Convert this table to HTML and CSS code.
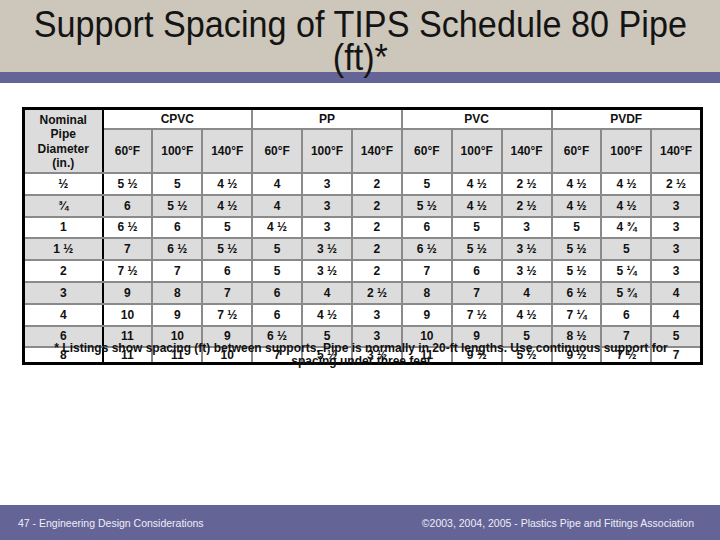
FILE: index.html
```html
<!DOCTYPE html>
<html>
<head>
<meta charset="utf-8">
<link rel="stylesheet" href="styles.css">
</head>
<body>
<div class="slide">
  <header class="title-band">
    <h1 class="title">Support Spacing of TIPS Schedule 80 Pipe<br>(ft)*</h1>
  </header>
  <div class="rule"></div>
  <main class="content">
    <div class="table-wrap">
      <table class="grid">
        <colgroup>
          <col class="c-first">
          <col span="12" class="c-val">
        </colgroup>
        <thead>
          <tr class="h1">
            <th rowspan="2" class="first shade">Nominal<br>Pipe<br>Diameter<br>(in.)</th>
            <th colspan="3" class="grp">CPVC</th>
            <th colspan="3" class="grp">PP</th>
            <th colspan="3" class="grp">PVC</th>
            <th colspan="3" class="grp">PVDF</th>
          </tr>
          <tr class="h2 shade">
            <th class="gs">60°F</th><th>100°F</th><th>140°F</th>
            <th class="gs">60°F</th><th>100°F</th><th>140°F</th>
            <th class="gs">60°F</th><th>100°F</th><th>140°F</th>
            <th class="gs">60°F</th><th>100°F</th><th>140°F</th>
          </tr>
        </thead>
        <tbody>
          <tr><td class="first">½</td><td class="gs">5 ½</td><td>5</td><td>4 ½</td><td class="gs">4</td><td>3</td><td>2</td><td class="gs">5</td><td>4 ½</td><td>2 ½</td><td class="gs">4 ½</td><td>4 ½</td><td>2 ½</td></tr>
          <tr class="shade"><td class="first">¾</td><td class="gs">6</td><td>5 ½</td><td>4 ½</td><td class="gs">4</td><td>3</td><td>2</td><td class="gs">5 ½</td><td>4 ½</td><td>2 ½</td><td class="gs">4 ½</td><td>4 ½</td><td>3</td></tr>
          <tr><td class="first">1</td><td class="gs">6 ½</td><td>6</td><td>5</td><td class="gs">4 ½</td><td>3</td><td>2</td><td class="gs">6</td><td>5</td><td>3</td><td class="gs">5</td><td>4 ¾</td><td>3</td></tr>
          <tr class="shade"><td class="first">1 ½</td><td class="gs">7</td><td>6 ½</td><td>5 ½</td><td class="gs">5</td><td>3 ½</td><td>2</td><td class="gs">6 ½</td><td>5 ½</td><td>3 ½</td><td class="gs">5 ½</td><td>5</td><td>3</td></tr>
          <tr><td class="first">2</td><td class="gs">7 ½</td><td>7</td><td>6</td><td class="gs">5</td><td>3 ½</td><td>2</td><td class="gs">7</td><td>6</td><td>3 ½</td><td class="gs">5 ½</td><td>5 ¼</td><td>3</td></tr>
          <tr class="shade"><td class="first">3</td><td class="gs">9</td><td>8</td><td>7</td><td class="gs">6</td><td>4</td><td>2 ½</td><td class="gs">8</td><td>7</td><td>4</td><td class="gs">6 ½</td><td>5 ¾</td><td>4</td></tr>
          <tr><td class="first">4</td><td class="gs">10</td><td>9</td><td>7 ½</td><td class="gs">6</td><td>4 ½</td><td>3</td><td class="gs">9</td><td>7 ½</td><td>4 ½</td><td class="gs">7 ¼</td><td>6</td><td>4</td></tr>
          <tr class="shade"><td class="first">6</td><td class="gs">11</td><td>10</td><td>9</td><td class="gs">6 ½</td><td>5</td><td>3</td><td class="gs">10</td><td>9</td><td>5</td><td class="gs">8 ½</td><td>7</td><td>5</td></tr>
          <tr class="last"><td class="first">8</td><td class="gs">11</td><td>11</td><td>10</td><td class="gs">7</td><td>5 ½</td><td>3 ½</td><td class="gs">11</td><td>9 ½</td><td>5 ½</td><td class="gs">9 ½</td><td>7 ½</td><td>7</td></tr>
        </tbody>
      </table>
      <p class="footnote">* Listings show spacing (ft) between supports. Pipe is normally in 20-ft lengths. Use continuous support for<br>spacing under three feet</p>
    </div>
  </main>
  <footer class="footer">
    <span class="foot-left">47 - Engineering Design Considerations</span>
    <span class="foot-right">©2003, 2004, 2005 - Plastics Pipe and Fittings Association</span>
  </footer>
</div>
</body>
</html>
```
FILE: styles.css
```css
html, body {
  margin: 0;
  padding: 0;
  background: #ffffff;
}

.slide {
  width: 720px;
  height: 540px;
  display: flex;
  flex-direction: column;
  font-family: "Liberation Sans", Arial, sans-serif;
  overflow: hidden;
}

.title-band {
  height: 64px;
  padding-top: 8px;
  background: #cdc6ba;
  display: flex;
  justify-content: center;
}

.title {
  margin: 0;
  font-size: 35px;
  line-height: 30px;
  font-weight: normal;
  color: #141414;
  text-align: center;
  white-space: nowrap;
  transform: scale(0.977, 1.08);
  transform-origin: 50% 0;
  position: relative;
  z-index: 1;
  height: 60px;
}

.rule {
  height: 11px;
  background: #646496;
}

.content {
  padding: 24px 0 0 22px;
}

.table-wrap {
  position: relative;
  width: 678px;
}

.grid {
  width: 678px;
  table-layout: fixed;
  border-collapse: collapse;
  border: 3px solid #000000;
  font-size: 12px;
  font-weight: bold;
  color: #111111;
  text-align: center;
}

.c-first { width: 79px; }
.c-val { width: 49.9px; }

.grid th, .grid td {
  border: 2px solid #8a8a8a;
  padding: 0;
  text-align: center;
  vertical-align: middle;
}

.grid .first {
  border-right: 2px solid #000000;
}

.grid .gs {
  border-left: 2px solid #000000;
}

.grid .grp {
  border-left: 2px solid #000000;
  background: #ffffff;
  height: 18px;
}

.h1 th.first {
  line-height: 14.5px;
  padding-top: 1px;
}

.h2 th {
  height: 42px;
}

.shade td, .shade th, th.shade {
  background: #dcdcdc;
}

.grid tbody td {
  height: 19.8px;
}

.grid tbody tr.last td {
  height: 14px;
  vertical-align: bottom;
  line-height: 13px;
}

.footnote {
  position: absolute;
  left: 0;
  right: 0;
  bottom: -2px;
  margin: 0;
  font-size: 12px;
  line-height: 11px;
  font-weight: bold;
  color: #111111;
  text-align: center;
  transform: scaleY(1.12);
  transform-origin: 50% 100%;
}

.footer {
  margin-top: auto;
  height: 35px;
  background: #646496;
  color: #eeeef6;
  font-size: 10.5px;
  display: flex;
  align-items: center;
  justify-content: space-between;
  padding: 0 26px 0 18px;
}
```
